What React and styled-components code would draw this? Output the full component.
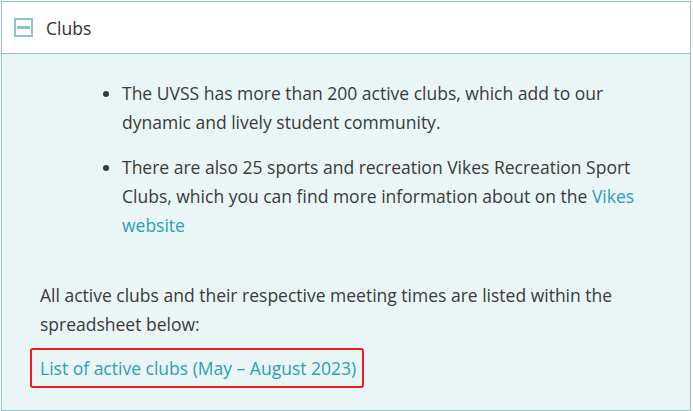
import React from "react";
import styled, { createGlobalStyle } from "styled-components";

const GlobalStyle = createGlobalStyle`
  html, body {
    margin: 0;
    padding: 0;
    background: #fff;
  }
  body {
    font-family: "Open Sans", "Noto Sans", sans-serif;
    color: #3a3a3a;
  }
`;

const Panel = styled.section`
  margin: 1px 2px 0 1px;
  width: 688px;
  border: 1px solid #8ec3c7;
  background: #eaf6f6;
`;

const Header = styled.div`
  display: flex;
  align-items: center;
  gap: 13px;
  height: 51px;
  padding: 0 12px;
  background: #fff;
  border-bottom: 1px solid #8ec3c7;
  font-size: 17.5px;
  color: #333;
`;

const Toggle = styled.span`
  display: flex;
  align-items: center;
  justify-content: center;
  box-sizing: border-box;
  width: 19px;
  height: 19px;
  border: 2px solid #8ec3c7;

  &::before {
    content: "";
    width: 13px;
    height: 3px;
    background: #8ec3c7;
  }
`;

const Body = styled.div`
  padding: 25px 30px 22px 38px;
  font-size: 17.5px;
  line-height: 29px;
`;

const List = styled.ul`
  margin: 0 0 41px 0;
  padding-left: 82px;
  display: flex;
  flex-direction: column;
  gap: 16px;
`;

const Item = styled.li`
  padding-left: 0;
`;

const Para = styled.p`
  margin: 0 0 9px 0;
`;

const Link = styled.a`
  color: #2a9fb5;
  text-decoration: none;
`;

const Highlight = styled.div`
  display: inline-block;
  margin-left: -10px;
  padding: 4px 6px 3px 8px;
  border: 2px solid #ee1c1c;
  border-radius: 3px;
`;

const App = () => (
  <>
    <GlobalStyle />
    <Panel>
      <Header>
        <Toggle />
        <span>Clubs</span>
      </Header>
      <Body>
        <List>
          <Item>
            The UVSS has more than 200 active clubs, which add to our dynamic and lively
            student community.
          </Item>
          <Item>
            There are also 25 sports and recreation Vikes Recreation Sport Clubs, which you
            can find more information about on the <Link href="#">Vikes website</Link>
          </Item>
        </List>
        <Para>
          All active clubs and their respective meeting times are listed within the
          spreadsheet below:
        </Para>
        <Highlight>
          <Link href="#">List of active clubs (May – August 2023)</Link>
        </Highlight>
      </Body>
    </Panel>
  </>
);

export default App;
